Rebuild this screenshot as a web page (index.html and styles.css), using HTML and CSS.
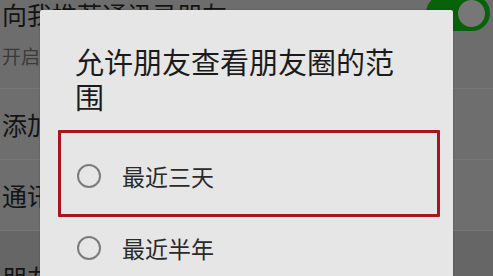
FILE: index.html
```html
<!DOCTYPE html>
<html lang="zh-CN">
<head>
<meta charset="utf-8">
<title>朋友圈权限</title>
<link rel="stylesheet" href="styles.css">
</head>
<body>
<div class="screen">
  <div class="settings">
    <div class="row row-first">
      <div class="row-text">
        <div class="row-title">向我推荐通讯录朋友</div>
        <div class="row-sub">开启后，为你推荐已经开通微信的手机联系人</div>
      </div>
      <div class="toggle"><div class="knob"></div></div>
    </div>
    <div class="row row-mid"><div class="row-title">添加我的方式</div></div>
    <div class="row row-mid"><div class="row-title">通讯录黑名单</div></div>
    <div class="row row-last"><div class="row-title">朋友圈</div></div>
  </div>

  <div class="dialog">
    <div class="dialog-title">允许朋友查看朋友圈的范围</div>
    <div class="options">
      <div class="option option-first highlight">
        <span class="radio"></span>
        <span class="option-label">最近三天</span>
      </div>
      <div class="option option-second">
        <span class="radio"></span>
        <span class="option-label">最近半年</span>
      </div>
    </div>
  </div>
</div>
</body>
</html>
```

FILE: styles.css
```css
* { box-sizing: border-box; }

html, body {
  margin: 0;
  padding: 0;
}

body {
  width: 493px;
  height: 276px;
  overflow: hidden;
  background: #6c6c6c;
  font-family: "Noto Sans CJK SC", "Noto Sans", sans-serif;
}

.screen {
  position: relative;
  width: 493px;
  height: 276px;
  overflow: hidden;
}

/* ---------- dimmed settings page ---------- */
.settings {
  display: flex;
  flex-direction: column;
}

.row {
  display: flex;
  align-items: center;
  padding-left: 2px;
  border-bottom: 1px solid #767676;
  background: #6d6d6d;
}

.row-first {
  height: 89px;
  align-items: flex-start;
  justify-content: space-between;
}

.row-mid {
  height: 71px;
  background: #6e6e6e;
}

.row-last {
  height: 60px;
  align-items: flex-start;
  padding-top: 32px;
  border-bottom: none;
  background: #666666;
}

.row-text {
  display: flex;
  flex-direction: column;
}

.row-title {
  font-size: 25px;
  line-height: 28px;
  color: #141414;
  white-space: nowrap;
}

.row-sub {
  margin-top: 17px;
  font-size: 19px;
  line-height: 22px;
  color: #3a3a3a;
  white-space: nowrap;
}

.toggle {
  flex: none;
  width: 64px;
  height: 36px;
  margin-top: -5px;
  margin-right: 3px;
  border-radius: 18px;
  background: #08620a;
  display: flex;
  align-items: center;
  justify-content: flex-end;
  padding-right: 5px;
}

.knob {
  width: 27px;
  height: 27px;
  border-radius: 50%;
  background: #777777;
}

/* ---------- dialog ---------- */
.dialog {
  position: absolute;
  left: 40px;
  top: 10px;
  width: 413px;
  height: 300px;
  background: #e6e6e6;
  border-radius: 2px;
  box-shadow: 0 0 2px rgba(0, 0, 0, 0.25);
  padding-top: 34px;
}

.dialog-title {
  padding: 0 36px 0 35px;
  font-size: 29px;
  line-height: 35px;
  color: #1b1b1b;
}

.options {
  margin-top: 16px;
  margin-left: 18px;
  display: flex;
  flex-direction: column;
}

.option {
  width: 382px;
  display: flex;
  align-items: center;
  border: 3px solid transparent;
  padding-left: 16px;
}

.option-first {
  height: 87px;
  padding-top: 5px;
}

.option-second {
  height: 62px;
}

.highlight {
  border: 3px solid #a3171d;
  border-radius: 1px;
}

.radio {
  flex: none;
  width: 24px;
  height: 24px;
  border-radius: 50%;
  border: 2px solid #7c7c7c;
}

.option-label {
  margin-left: 21px;
  font-size: 23px;
  line-height: 28px;
  color: #2a2a2a;
}
```
